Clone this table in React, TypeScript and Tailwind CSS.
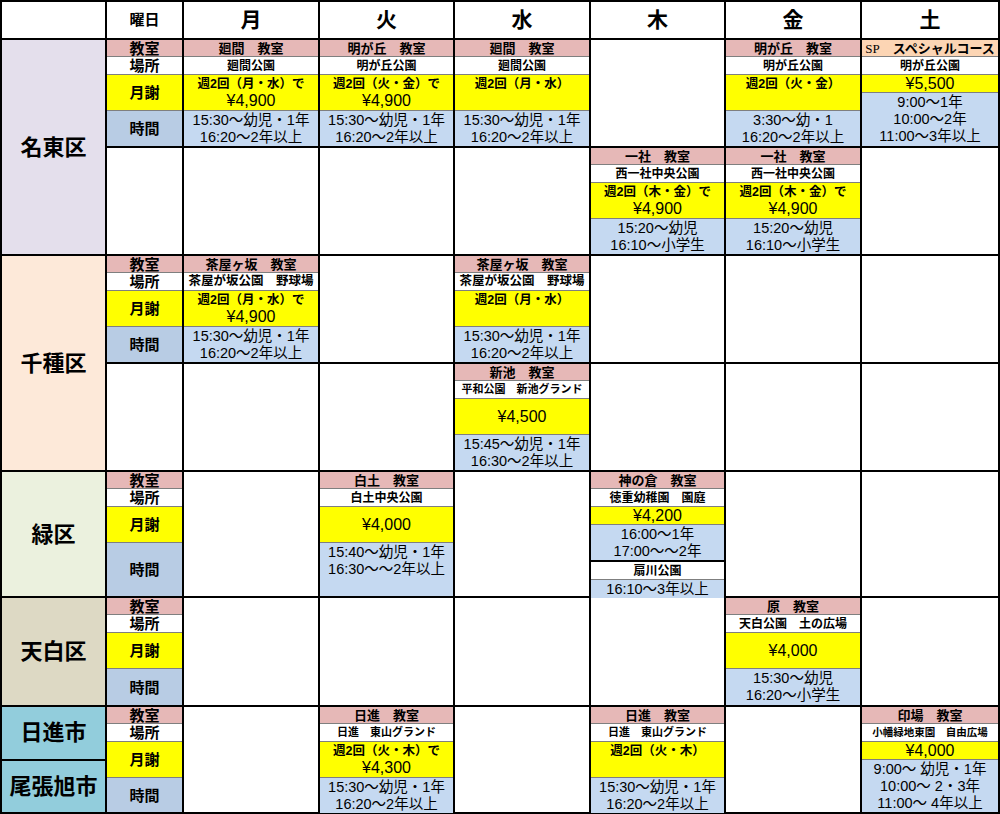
import React from "react";

type Fee =
  | { kind: "weekly"; text: string; price?: string }
  | { kind: "center"; price: string }
  | { kind: "short"; price: string };

type Block = {
  title: React.ReactNode;
  peach?: boolean;
  place: string;
  placeSize?: string;
  fee: Fee;
  times: string[];
};

const days = ["月", "火", "水", "木", "金", "土"];

// one class block (教室 / 場所 / 月謝 / 時間)
const Title = ({ children, peach }: { children: React.ReactNode; peach?: boolean }) => (
  <div
    className={`flex h-[16px] shrink-0 items-center justify-center text-[13px] font-bold leading-none whitespace-nowrap ${
      peach ? "bg-[#fcd5b4]" : "bg-[#e6b8b7]"
    }`}
  >
    {children}
  </div>
);

const Place = ({ text, size, thick }: { text: string; size?: string; thick?: boolean }) => (
  <div
    className={`flex shrink-0 items-center justify-center bg-white font-bold leading-none whitespace-nowrap ${
      size ?? "text-[12px]"
    } ${thick ? "h-[19px] border-t-2 border-black" : "h-[18px] border-t border-[#7f7f7f]"}`}
  >
    {text}
  </div>
);

const FeeCell = ({ fee }: { fee: Fee }) => {
  if (fee.kind === "short") {
    return (
      <div className="flex h-[18px] shrink-0 items-center justify-center border-t border-[#7f7f7f] bg-[#ffff00] text-[16px] leading-none">
        {fee.price}
      </div>
    );
  }
  if (fee.kind === "center") {
    return (
      <div className="flex h-[36px] shrink-0 items-center justify-center border-t border-[#7f7f7f] bg-[#ffff00] text-[16px] leading-none">
        {fee.price}
      </div>
    );
  }
  return (
    <div className="flex h-[36px] shrink-0 flex-col items-center border-t border-[#7f7f7f] bg-[#ffff00] pt-[1px]">
      <div className="text-[12.5px] font-bold leading-[16px] whitespace-nowrap">{fee.text}</div>
      {fee.price && <div className="text-[16px] leading-[18px]">{fee.price}</div>}
    </div>
  );
};

const Times = ({ lines, fixed }: { lines: string[]; fixed?: boolean }) => (
  <div
    className={`flex flex-col items-center border-t border-[#7f7f7f] bg-[#c5d9f1] pt-[1px] text-[14.5px] leading-[17px] whitespace-nowrap ${
      fixed ? "h-[36px] shrink-0" : "flex-1"
    }`}
  >
    {lines.map((l, i) => (
      <div key={i}>{l}</div>
    ))}
  </div>
);

const BlockCell = ({ b }: { b: Block }) => (
  <div className="flex flex-col bg-white">
    <Title peach={b.peach}>{b.title}</Title>
    <Place text={b.place} size={b.placeSize} />
    <FeeCell fee={b.fee} />
    <Times lines={b.times} />
  </div>
);

const Empty = () => <div className="bg-white" />;

const Labels = () => (
  <div className="flex flex-col bg-white font-bold">
    <div className="flex h-[16px] shrink-0 items-center justify-center bg-[#e6b8b7] text-[15px] leading-none">教室</div>
    <div className="flex h-[18px] shrink-0 items-center justify-center border-t border-[#7f7f7f] text-[15px] leading-none">場所</div>
    <div className="flex h-[36px] shrink-0 items-center justify-center border-t border-[#7f7f7f] bg-[#ffff00] text-[15px] leading-none">月謝</div>
    <div className="flex flex-1 items-center justify-center border-t border-[#7f7f7f] bg-[#b8cce4] text-[15px] leading-none">時間</div>
  </div>
);

const kaiba: Block = {
  title: "廻間　教室",
  place: "廻間公園",
  fee: { kind: "weekly", text: "週2回（月・水）で", price: "¥4,900" },
  times: ["15:30〜幼児・1年", "16:20〜2年以上"],
};

const meitoA: (Block | null)[] = [
  kaiba,
  {
    title: "明が丘　教室",
    place: "明が丘公園",
    fee: { kind: "weekly", text: "週2回（火・金）で", price: "¥4,900" },
    times: ["15:30〜幼児・1年", "16:20〜2年以上"],
  },
  { ...kaiba, fee: { kind: "weekly", text: "週2回（月・水）" } },
  null,
  {
    title: "明が丘　教室",
    place: "明が丘公園",
    fee: { kind: "weekly", text: "週2回（火・金）" },
    times: ["3:30〜幼・1", "16:20〜2年以上"],
  },
  {
    title: (
      <>
        <span className="font-['Liberation_Serif','Noto_Sans_CJK_JP',serif] text-[13px] font-normal">SP</span>
        <span>　スペシャルコース</span>
      </>
    ),
    peach: true,
    place: "明が丘公園",
    fee: { kind: "short", price: "¥5,500" },
    times: ["9:00〜1年", "10:00〜2年", "11:00〜3年以上"],
  },
];

const ikkyaku: Block = {
  title: "一社　教室",
  place: "西一社中央公園",
  fee: { kind: "weekly", text: "週2回（木・金）で", price: "¥4,900" },
  times: ["15:20〜幼児", "16:10〜小学生"],
};

const meitoB: (Block | null)[] = [null, null, null, ikkyaku, ikkyaku, null];

const chaya: Block = {
  title: "茶屋ヶ坂　教室",
  place: "茶屋が坂公園　野球場",
  placeSize: "text-[12.5px]",
  fee: { kind: "weekly", text: "週2回（月・水）で", price: "¥4,900" },
  times: ["15:30〜幼児・1年", "16:20〜2年以上"],
};

const chikusaA: (Block | null)[] = [
  chaya,
  null,
  { ...chaya, fee: { kind: "weekly", text: "週2回（月・水）" } },
  null,
  null,
  null,
];

const chikusaB: (Block | null)[] = [
  null,
  null,
  {
    title: "新池　教室",
    place: "平和公園　新池グランド",
    placeSize: "text-[11px]",
    fee: { kind: "center", price: "¥4,500" },
    times: ["15:45〜幼児・1年", "16:30〜2年以上"],
  },
  null,
  null,
  null,
];

const nisshinBlock: Block = {
  title: "日進　教室",
  place: "日進　東山グランド",
  placeSize: "text-[11px]",
  fee: { kind: "weekly", text: "週2回（火・木）で", price: "¥4,300" },
  times: ["15:30〜幼児・1年", "16:20〜2年以上"],
};

const Cells = ({ row }: { row: (Block | null)[] }) => (
  <>
    {row.map((b, i) => (b ? <BlockCell key={i} b={b} /> : <Empty key={i} />))}
  </>
);

const District = ({ name, bg, span }: { name: string; bg: string; span?: boolean }) => (
  <div className={`flex items-center justify-center text-[22px] font-bold ${bg} ${span ? "row-span-2" : ""}`}>
    {name}
  </div>
);

export default function App() {
  return (
    <div className="h-[814px] w-[1000px] bg-white font-['Liberation_Sans','Noto_Sans_CJK_JP',sans-serif] text-black">
      <div className="grid h-[814px] w-[1000px] grid-cols-[103px_75px_134px_133px_134px_133px_134px_136px] grid-rows-[36px_106px_106px_106px_106px_124px_107px_105px] gap-[2px] bg-black p-[2px]">
        {/* header */}
        <div className="bg-white" />
        <div className="flex items-center justify-center bg-white text-[15px] font-bold">曜日</div>
        {days.map((d) => (
          <div key={d} className="flex items-center justify-center bg-white text-[21px] font-bold">
            {d}
          </div>
        ))}

        {/* 名東区 */}
        <District name="名東区" bg="bg-[#e4dfec]" span />
        <Labels />
        <Cells row={meitoA} />
        <Empty />
        <Cells row={meitoB} />

        {/* 千種区 */}
        <District name="千種区" bg="bg-[#fde9d9]" span />
        <Labels />
        <Cells row={chikusaA} />
        <Empty />
        <Cells row={chikusaB} />

        {/* 緑区 */}
        <District name="緑区" bg="bg-[#ebf1de]" />
        <Labels />
        <Empty />
        <BlockCell
          b={{
            title: "白土　教室",
            place: "白土中央公園",
            fee: { kind: "center", price: "¥4,000" },
            times: ["15:40〜幼児・1年", "16:30〜〜2年以上"],
          }}
        />
        <Empty />
        <div className="flex flex-col bg-white">
          <Title>神の倉　教室</Title>
          <Place text="徳重幼稚園　園庭" />
          <FeeCell fee={{ kind: "short", price: "¥4,200" }} />
          <Times lines={["16:00〜1年", "17:00〜〜2年"]} fixed />
          <Place text="扇川公園" thick />
          <Times lines={["16:10〜3年以上"]} />
        </div>
        <Empty />
        <Empty />

        {/* 天白区 */}
        <District name="天白区" bg="bg-[#ddd9c4]" />
        <Labels />
        <Empty />
        <Empty />
        <Empty />
        <Empty />
        <BlockCell
          b={{
            title: "原　教室",
            place: "天白公園　土の広場",
            fee: { kind: "center", price: "¥4,000" },
            times: ["15:30〜幼児", "16:20〜小学生"],
          }}
        />
        <Empty />

        {/* 日進市 / 尾張旭市 */}
        <div className="flex flex-col gap-[2px] bg-black">
          <div className="flex flex-1 items-center justify-center bg-[#92cddc] text-[22px] font-bold">日進市</div>
          <div className="flex flex-1 items-center justify-center bg-[#92cddc] text-[22px] font-bold">尾張旭市</div>
        </div>
        <Labels />
        <Empty />
        <BlockCell b={nisshinBlock} />
        <Empty />
        <BlockCell b={{ ...nisshinBlock, fee: { kind: "weekly", text: "週2回（火・木）" } }} />
        <Empty />
        <BlockCell
          b={{
            title: "印場　教室",
            place: "小幡緑地東園　自由広場",
            placeSize: "text-[10.5px]",
            fee: { kind: "short", price: "¥4,000" },
            times: ["9:00〜 幼児・1年", "10:00〜 2・3年", "11:00〜 4年以上"],
          }}
        />
      </div>
    </div>
  );
}
